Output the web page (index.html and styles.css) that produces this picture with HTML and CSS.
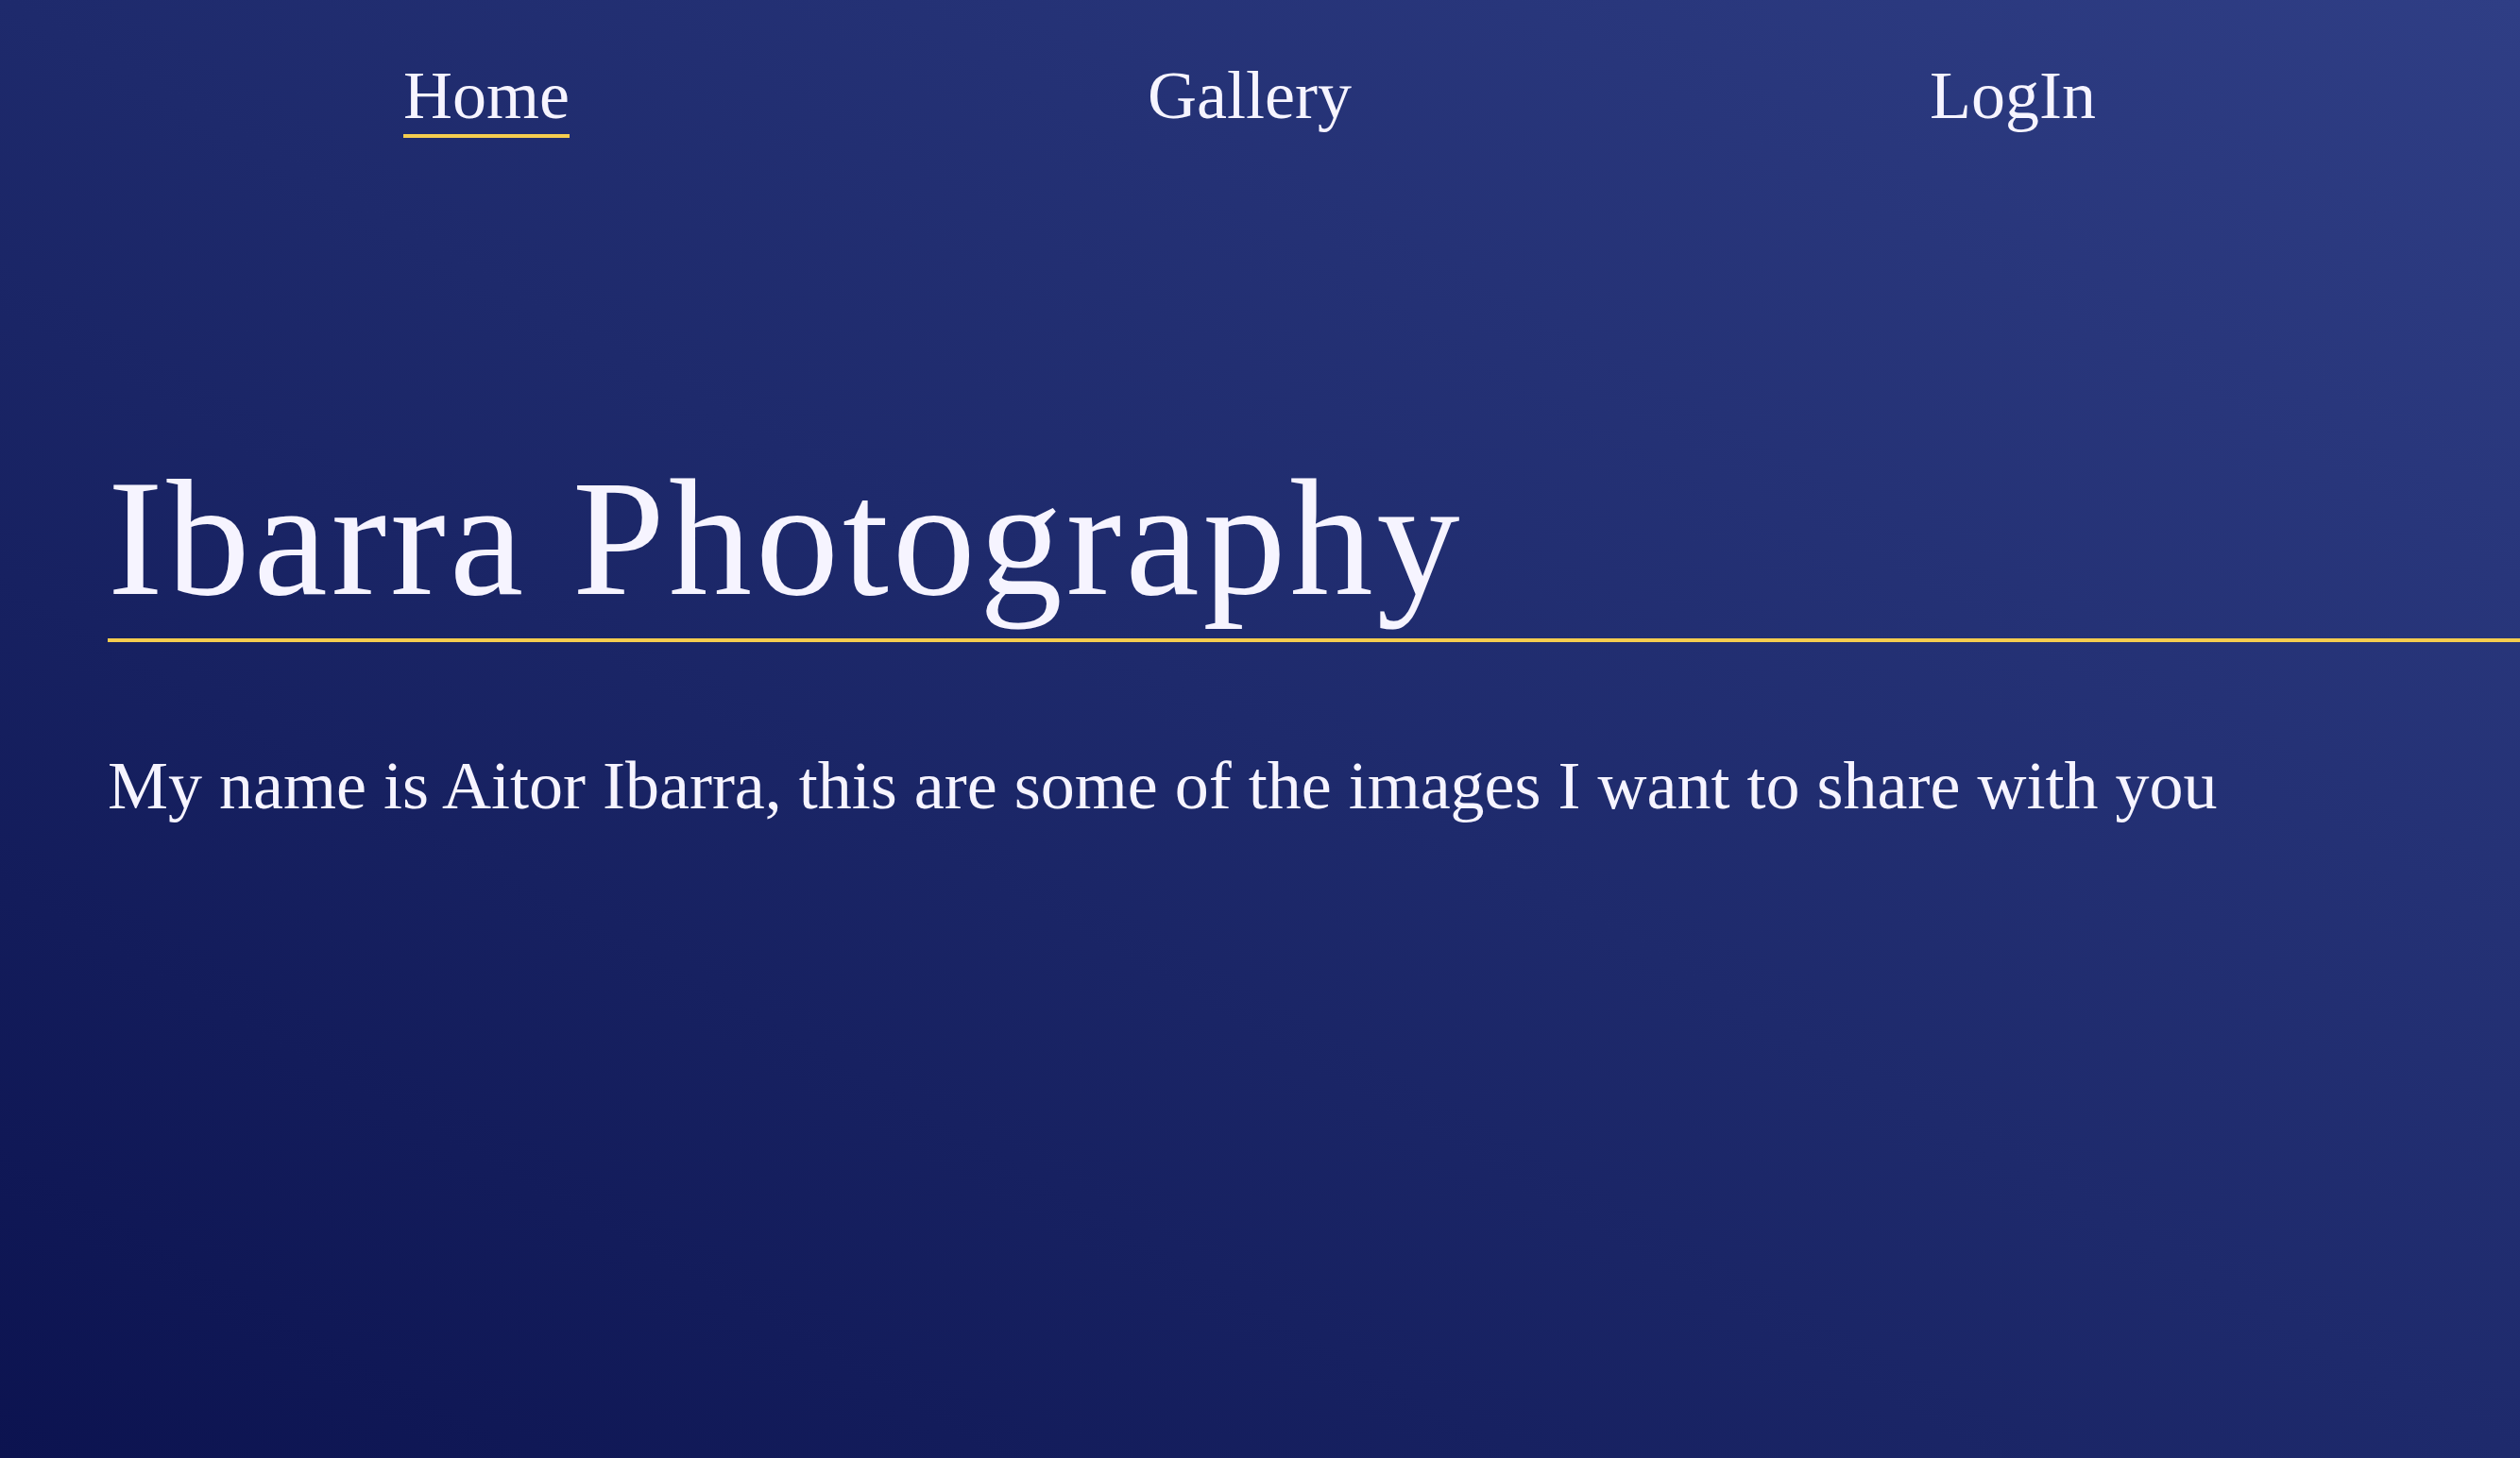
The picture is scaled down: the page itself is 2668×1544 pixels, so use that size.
FILE: index.html
```html
<!DOCTYPE html>
<html lang="en">
<head>
<meta charset="utf-8">
<title>Ibarra Photography</title>
<link rel="stylesheet" href="styles.css">
</head>
<body>
  <nav class="nav">
    <div class="nav-cell"><a class="nav-link active" href="#">Home</a></div>
    <div class="nav-cell"><a class="nav-link" href="#">Gallery</a></div>
    <div class="nav-cell"><a class="nav-link" href="#">LogIn</a></div>
  </nav>
  <main class="hero">
    <h1 class="title">Ibarra Photography</h1>
    <p class="lead">My name is Aitor Ibarra, this are some of the images I want to share with you</p>
  </main>
</body>
</html>
```
FILE: styles.css
```css
html, body {
  margin: 0;
  padding: 0;
}
body {
  width: 2668px;
  height: 1544px;
  overflow: hidden;
  background: linear-gradient(to top right, #0c1350 0%, #1e2a6c 50%, #2f3e85 100%);
  color: #f6f4ff;
  font-family: "Liberation Serif", "DejaVu Serif", serif;
}
.nav {
  display: grid;
  grid-template-columns: 808px 808px 808px;
  padding: 65px 0 0 111px;
}
.nav-cell {
  display: flex;
  justify-content: center;
  align-items: flex-start;
}
.nav-link {
  color: #f6f4ff;
  text-decoration: none;
  font-size: 72px;
  line-height: 1;
  padding-bottom: 5px;
  border-bottom: 4px solid transparent;
}
.nav-link.active {
  border-bottom-color: #f5cd4f;
}
.hero {
  padding: 336px 0 0 114px;
}
.title {
  margin: 0;
  font-weight: normal;
  font-size: 176px;
  letter-spacing: 4px;
  line-height: 1;
  padding-bottom: 18px;
  border-bottom: 4px solid #f5cd4f;
}
.lead {
  margin: 116px 0 0 0;
  font-size: 72px;
  line-height: 1;
}
```
